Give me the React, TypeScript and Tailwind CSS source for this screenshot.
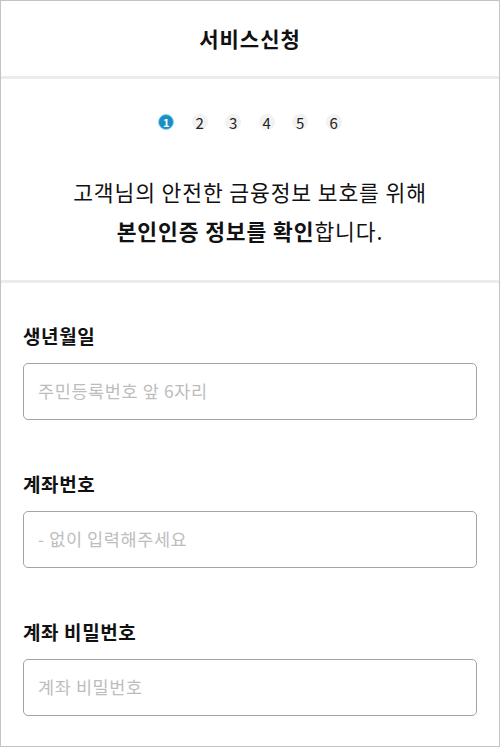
import React from "react";

const font = { fontFamily: '"Noto Sans CJK KR", "Noto Sans", sans-serif' };

function Field({ label, placeholder }: { label: string; placeholder: string }) {
  return (
    <div className="flex flex-col">
      <div className="h-[26px] leading-[26px] text-[19px] font-bold text-[#111] tracking-[0.6px]">{label}</div>
      <div className="mt-[14px] h-[57px] rounded-[5px] border border-[#a3a3a3] flex items-center px-[14px]">
        <span className="text-[17.5px] text-[#bdbdbd] tracking-[0.6px]">{placeholder}</span>
      </div>
    </div>
  );
}

export default function App() {
  const steps = [1, 2, 3, 4, 5, 6];
  return (
    <div style={font} className="w-[500px] h-[747px] bg-white border border-[#c4c4c4] flex flex-col overflow-hidden">
      <div className="h-[75px] flex items-center justify-center">
        <span className="text-[21px] font-bold text-[#111] tracking-[1px]">서비스신청</span>
      </div>
      <div className="h-[3px] bg-[#ececec]" />
      <div className="h-[201px] flex flex-col items-center">
        <div className="mt-[35px] flex items-center gap-[17.5px] h-[16px]">
          {steps.map((s) =>
            s === 1 ? (
              <div
                key={s}
                className="w-[16px] h-[16px] rounded-full bg-[#1a8fc4] border-[1.5px] border-[#8fd4ef] flex items-center justify-center text-white text-[11px] font-bold leading-none"
              >
                1
              </div>
            ) : (
              <div
                key={s}
                className="w-[16px] h-[16px] rounded-full bg-[#f2f2f2] flex items-center justify-center text-[#222] text-[15px] leading-none"
              >
                {s}
              </div>
            )
          )}
        </div>
        <div className="mt-[42px] text-center text-[21.5px] leading-[39px] text-[#111] tracking-[0.9px]">
          <div>고객님의 안전한 금융정보 보호를 위해</div>
          <div>
            <span className="font-bold">본인인증 정보를 확인</span>합니다.
          </div>
        </div>
      </div>
      <div className="h-[3px] bg-[#ececec]" />
      <div className="px-[22px] pt-[40px] flex flex-col gap-[51px]">
        <Field label="생년월일" placeholder="주민등록번호 앞 6자리" />
        <Field label="계좌번호" placeholder="- 없이 입력해주세요" />
        <Field label="계좌 비밀번호" placeholder="계좌 비밀번호" />
      </div>
    </div>
  );
}
